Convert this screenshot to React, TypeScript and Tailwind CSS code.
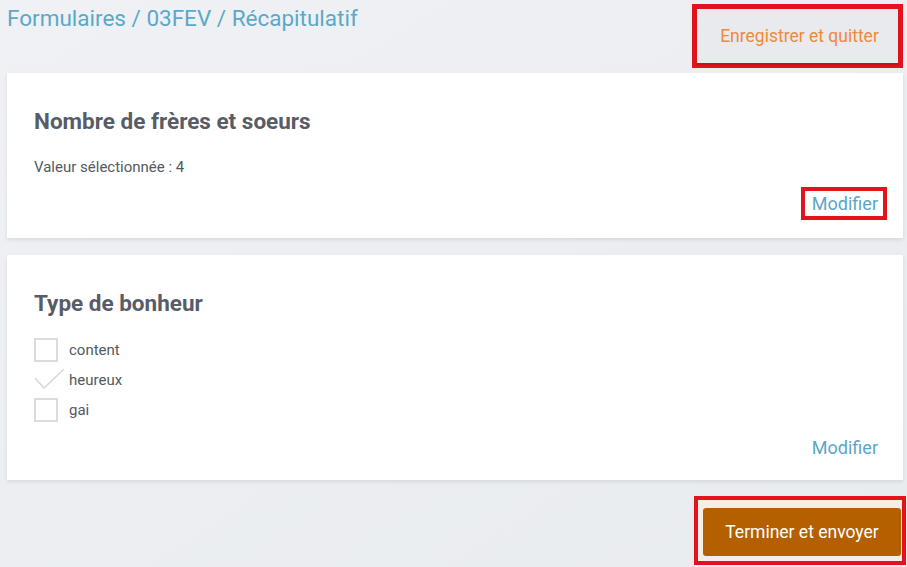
import React from "react";

const font = { fontFamily: "Roboto, 'Liberation Sans', sans-serif" };

function Box({ checked }: { checked?: boolean }) {
  if (checked) {
    return (
      <svg width="30" height="24" viewBox="0 0 30 24" className="shrink-0 -mr-[6px]">
        <path d="M1 10 L10 20 L30 1" fill="none" stroke="#d9d9d9" strokeWidth="1.6" />
      </svg>
    );
  }
  return <div className="w-[24px] h-[24px] border-2 border-[#dcdcdc] bg-white shrink-0" />;
}

function ModifierLink({ outlined }: { outlined?: boolean }) {
  return (
    <div className="flex justify-end">
      <span
        className={
          "pl-[7px] pr-[5px] text-[18px] leading-[25px] text-[#5aa6c9] " +
          (outlined ? "outline-[4px] outline-solid outline-[#e3131d]" : "")
        }
      >
        Modifier
      </span>
    </div>
  );
}

export default function App() {
  return (
    <div
      style={font}
      className="min-h-[567px] w-full bg-gradient-to-br from-[#eff1f4] to-[#e9ecef] pl-[7px] pr-[4px] overflow-hidden"
    >
      <div className="flex justify-between items-start h-[73px]">
        <div className="pt-[4px] text-[22.5px] leading-[28px] text-[#5aa9c9]">
          Formulaires / 03FEV / Récapitulatif
        </div>
        <div className="mt-[4px] border-[5px] border-[#e3131d]">
          <div className="w-[201px] h-[54px] bg-[#e8eaed] shadow-[0_2px_1px_rgba(0,0,0,0.12)] flex items-center justify-center pl-[4px] text-[17.5px] text-[#f0893a]">
            Enregistrer et quitter
          </div>
        </div>
      </div>

      <div className="bg-white shadow-[0_2px_4px_rgba(0,0,0,0.09)] pl-[27px] pr-[20px] pt-[35px] pb-[22px]">
        <div className="text-[22.5px] leading-[26px] font-bold text-[#575c66]">
          Nombre de frères et soeurs
        </div>
        <div className="mt-[23px] text-[15px] leading-[20px] text-[#555a60]">
          Valeur sélectionnée : 4
        </div>
        <div className="mt-[14px]">
          <ModifierLink outlined />
        </div>
      </div>

      <div className="mt-[17px] bg-white shadow-[0_2px_4px_rgba(0,0,0,0.09)] pl-[27px] pr-[20px] pt-[35px] pb-[20px]">
        <div className="text-[22.5px] leading-[26px] font-bold text-[#575c66]">Type de bonheur</div>
        <div className="mt-[22px] flex flex-col gap-[6px]">
          {[
            { label: "content", checked: false },
            { label: "heureux", checked: true },
            { label: "gai", checked: false },
          ].map((it) => (
            <div key={it.label} className="flex items-center h-[24px] gap-[11px]">
              <Box checked={it.checked} />
              <span className="text-[15px] leading-[20px] text-[#555a60]">{it.label}</span>
            </div>
          ))}
        </div>
        <div className="mt-[13px]">
          <ModifierLink />
        </div>
      </div>

      <div className="flex justify-end mt-[16px] -mr-[3px]">
        <div className="border-[4px] border-[#e3131d] bg-[#f5eee7] pl-[5px] pr-[1px] pt-[8px] pb-[5px]">
          <div className="w-[198px] h-[48px] rounded-[3px] bg-[#b45f00] flex items-center justify-center text-[17.5px] text-white">
            Terminer et envoyer
          </div>
        </div>
      </div>
    </div>
  );
}
